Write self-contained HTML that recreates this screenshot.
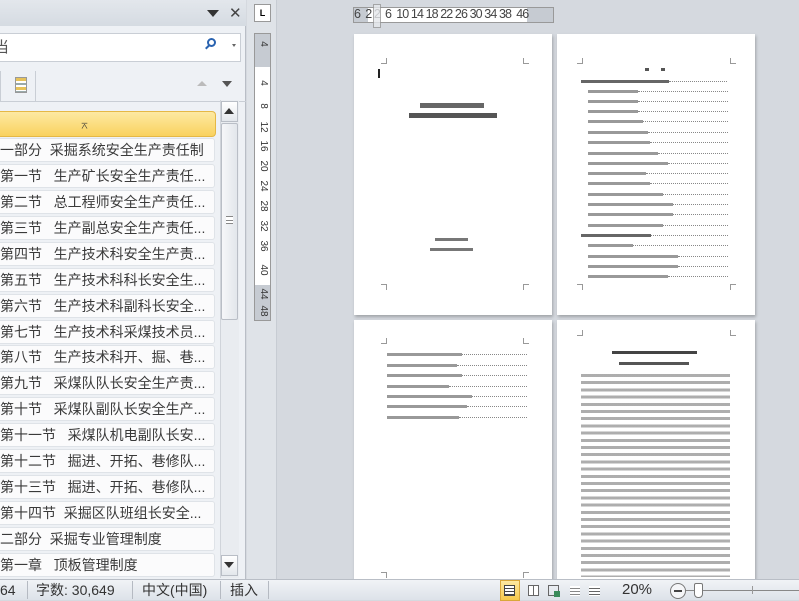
<!DOCTYPE html>
<html><head><meta charset="utf-8">
<style>
*{margin:0;padding:0;box-sizing:border-box}
body{width:799px;height:600px;overflow:hidden;position:relative;background:#d5d9df;font-family:"Liberation Sans","Noto Sans CJK SC",sans-serif}
.abs{position:absolute}
#nav{left:0;top:0;width:246px;height:579px;background:#eef1f5;border-right:1px solid #b9bec6}
.item{position:absolute;left:0;width:215px;height:24px;background:#fbfbfc;border:1px solid #dfe3e8;border-left:none;border-radius:0 3px 3px 0;font-size:14px;color:#3a3a3a;line-height:22px;white-space:nowrap;overflow:hidden}
.page{position:absolute;background:#fff;box-shadow:1px 2px 3px rgba(0,0,0,.25)}
.cm{position:absolute;width:6px;height:6px;border-color:#999;border-style:solid;border-width:0}
.bar{position:absolute;height:3px;background:#555}
.dots{position:absolute;height:1px;border-top:1px dotted #888}
.vn{position:absolute;left:256px;width:14px;font-size:10px;color:#333;transform:rotate(90deg);text-align:center;line-height:12px}
#status{left:0;top:579px;width:799px;height:21px;background:linear-gradient(#f1f3f6,#dde2e9);border-top:1px solid #b9bec6;font-size:14px;color:#333;line-height:20px}
</style></head><body>

<div id="nav" class="abs">
  <div class="abs" style="left:0;top:0;width:246px;height:26px;background:linear-gradient(#e3e7ec,#d5dbe2)"></div>
  <div class="abs" style="left:207px;top:10px;width:0;height:0;border-left:6px solid transparent;border-right:6px solid transparent;border-top:7px solid #333"></div>
  <div class="abs" style="left:229px;top:4px;font-size:15px;color:#444">✕</div>
  <div class="abs" style="left:0;top:33px;width:241px;height:29px;background:#fff;border:1px solid #c9ced5;border-left:none"></div>
  <div class="abs" style="left:-6px;top:36px;font-size:15px;color:#555">当</div>
  <div class="abs" style="left:207px;top:38px;width:9px;height:9px;border:2px solid #2a63b0;border-radius:50%"></div>
  <div class="abs" style="left:205px;top:46px;width:5px;height:2px;background:#2a63b0;transform:rotate(-45deg)"></div>
  <div class="abs" style="left:232px;top:44px;width:0;height:0;border-left:2px solid transparent;border-right:2px solid transparent;border-top:3px solid #666"></div>
  <div class="abs" style="left:0;top:71px;width:36px;height:30px;border-right:1px solid #c9ced5;border-left:1px solid #c9ced5"></div>
  <div class="abs" style="left:15px;top:77px;width:12px;height:16px;background:linear-gradient(#e6c25a 0 3px,#fff 3px 5px,#9aa 5px 7px,#fff 7px 9px,#e6c25a 9px 12px,#fff 12px 13px,#9aa 13px 16px);border:1px solid #999"></div>
  <div class="abs" style="left:197px;top:81px;width:0;height:0;border-left:5px solid transparent;border-right:5px solid transparent;border-bottom:5px solid #bbb"></div>
  <div class="abs" style="left:222px;top:81px;width:0;height:0;border-left:5px solid transparent;border-right:5px solid transparent;border-top:6px solid #555"></div>
  <div class="abs" style="left:0;top:101px;width:246px;height:1px;background:#c9ced5"></div>
  <div class="abs" style="left:0;top:111px;width:216px;height:26px;background:linear-gradient(#fde9a2,#f9d25f);border:1px solid #e5b845;border-left:none;border-radius:0 4px 4px 0"></div>
  <div class="abs" style="left:80px;top:119px;font-size:9px;color:#333">⌅</div>
  <div class="item" style="top:138px">一部分&nbsp;&nbsp;采掘系统安全生产责任制</div>
  <div class="item" style="top:164px">第一节&nbsp;&nbsp;&nbsp;生产矿长安全生产责任...</div>
  <div class="item" style="top:190px">第二节&nbsp;&nbsp;&nbsp;总工程师安全生产责任...</div>
  <div class="item" style="top:216px">第三节&nbsp;&nbsp;&nbsp;生产副总安全生产责任...</div>
  <div class="item" style="top:242px">第四节&nbsp;&nbsp;&nbsp;生产技术科安全生产责...</div>
  <div class="item" style="top:268px">第五节&nbsp;&nbsp;&nbsp;生产技术科科长安全生...</div>
  <div class="item" style="top:294px">第六节&nbsp;&nbsp;&nbsp;生产技术科副科长安全...</div>
  <div class="item" style="top:320px">第七节&nbsp;&nbsp;&nbsp;生产技术科采煤技术员...</div>
  <div class="item" style="top:345px">第八节&nbsp;&nbsp;&nbsp;生产技术科开、掘、巷...</div>
  <div class="item" style="top:371px">第九节&nbsp;&nbsp;&nbsp;采煤队队长安全生产责...</div>
  <div class="item" style="top:397px">第十节&nbsp;&nbsp;&nbsp;采煤队副队长安全生产...</div>
  <div class="item" style="top:423px">第十一节&nbsp;&nbsp;&nbsp;采煤队机电副队长安...</div>
  <div class="item" style="top:449px">第十二节&nbsp;&nbsp;&nbsp;掘进、开拓、巷修队...</div>
  <div class="item" style="top:475px">第十三节&nbsp;&nbsp;&nbsp;掘进、开拓、巷修队...</div>
  <div class="item" style="top:501px">第十四节&nbsp;&nbsp;采掘区队班组长安全...</div>
  <div class="item" style="top:527px">二部分&nbsp;&nbsp;采掘专业管理制度</div>
  <div class="item" style="top:553px">第一章&nbsp;&nbsp;&nbsp;顶板管理制度</div>
  <div class="abs" style="left:220px;top:100px;width:19px;height:478px;background:#e9ecf0;border-left:1px solid #d0d4da"></div>
  <div class="abs" style="left:221px;top:101px;width:17px;height:21px;background:linear-gradient(#fff,#e3e7ec);border:1px solid #b9bec6"></div>
  <div class="abs" style="left:224px;top:108px;width:0;height:0;border-left:5px solid transparent;border-right:5px solid transparent;border-bottom:6px solid #333"></div>
  <div class="abs" style="left:221px;top:123px;width:17px;height:197px;background:linear-gradient(90deg,#f6f7f9,#e2e6eb);border:1px solid #b9bec6;border-radius:2px"></div>
  <div class="abs" style="left:226px;top:216px;width:7px;height:8px;border-top:1px solid #888;border-bottom:1px solid #888;background:linear-gradient(#fff 0 3px,#888 3px 4px,#fff 4px)"></div>
  <div class="abs" style="left:221px;top:555px;width:17px;height:21px;background:linear-gradient(#fff,#e3e7ec);border:1px solid #b9bec6"></div>
  <div class="abs" style="left:224px;top:562px;width:0;height:0;border-left:5px solid transparent;border-right:5px solid transparent;border-top:6px solid #333"></div>
</div>

<!-- ruler area -->
<div class="abs" style="left:247px;top:0;width:30px;height:579px;background:#dfe3e8;border-right:1px solid #c7ccd3"></div>
<div class="abs" style="left:254px;top:4px;width:17px;height:18px;background:#fff;border:1px solid #999;font-size:9px;text-align:center;line-height:16px;font-weight:bold">L</div>
<div class="abs" style="left:254px;top:33px;width:17px;height:288px;background:#ffffff;border:1px solid #999"></div>
<div class="abs" style="left:255px;top:34px;width:15px;height:33px;background:#c6cbd2"></div>
<div class="abs" style="left:255px;top:285px;width:15px;height:35px;background:#c6cbd2"></div>
<div class="vn" style="top:38px">4</div>
<div class="vn" style="top:77px">4</div>
<div class="vn" style="top:100px">8</div>
<div class="vn" style="top:121px">12</div>
<div class="vn" style="top:140px">16</div>
<div class="vn" style="top:160px">20</div>
<div class="vn" style="top:180px">24</div>
<div class="vn" style="top:200px">28</div>
<div class="vn" style="top:220px">32</div>
<div class="vn" style="top:240px">36</div>
<div class="vn" style="top:264px">40</div>
<div class="vn" style="top:288px">44</div>
<div class="vn" style="top:305px">48</div>

<!-- horizontal ruler -->
<div class="abs" style="left:353px;top:7px;width:201px;height:16px;background:#fff;border:1px solid #999"></div>
<div class="abs" style="left:354px;top:8px;width:14px;height:14px;background:#c6cbd2"></div>
<div class="abs" style="left:527px;top:8px;width:26px;height:14px;background:#c6cbd2"></div>
<div class="abs" style="left:354px;top:7px;font-size:12.5px;color:#444;letter-spacing:-0.9px;white-space:pre">6  2 2  6  10 14 18 22 26 30 34 38  46</div>
<div class="abs" style="left:373px;top:4px;width:8px;height:24px;background:#e6e8ec;border:1px solid #999;opacity:.8"></div>

<!-- page 1 -->
<div class="page" style="left:354px;top:34px;width:198px;height:281px">
  <div class="cm" style="left:27px;top:24px;border-right-width:1px;border-bottom-width:1px"></div>
  <div class="cm" style="left:169px;top:24px;border-left-width:1px;border-bottom-width:1px"></div>
  <div class="cm" style="left:27px;top:250px;border-right-width:1px;border-top-width:1px"></div>
  <div class="cm" style="left:169px;top:250px;border-left-width:1px;border-top-width:1px"></div>
  <div class="abs" style="left:24px;top:35px;width:2px;height:9px;background:#222"></div>
  <div class="bar" style="left:66px;top:69px;width:64px;height:5px;background:#666"></div>
  <div class="bar" style="left:55px;top:79px;width:88px;height:5px;background:#555"></div>
  <div class="bar" style="left:81px;top:204px;width:33px;height:3px;background:#777"></div>
  <div class="bar" style="left:76px;top:214px;width:43px;height:3px;background:#777"></div>
</div>

<!-- page 2 TOC -->
<div class="page" style="left:557px;top:34px;width:198px;height:281px">
  <div class="cm" style="left:20px;top:24px;border-right-width:1px;border-bottom-width:1px"></div>
  <div class="cm" style="left:173px;top:24px;border-left-width:1px;border-bottom-width:1px"></div>
  <div class="cm" style="left:20px;top:250px;border-right-width:1px;border-top-width:1px"></div>
  <div class="cm" style="left:173px;top:250px;border-left-width:1px;border-top-width:1px"></div>
  <div class="bar" style="left:88px;top:34px;width:4px"></div>
  <div class="bar" style="left:104px;top:34px;width:4px"></div>
  <div class="bar" style="left:24px;top:46px;width:88px;background:#666"></div><div class="dots" style="left:112px;top:47px;width:58px"></div>
  <div class="bar" style="left:31px;top:56px;width:50px;background:#999"></div><div class="dots" style="left:81px;top:57px;width:90px"></div>
  <div class="bar" style="left:31px;top:66px;width:50px;background:#999"></div><div class="dots" style="left:81px;top:67px;width:90px"></div>
  <div class="bar" style="left:31px;top:76px;width:50px;background:#999"></div><div class="dots" style="left:81px;top:77px;width:90px"></div>
  <div class="bar" style="left:31px;top:86px;width:55px;background:#999"></div><div class="dots" style="left:86px;top:87px;width:85px"></div>
  <div class="bar" style="left:31px;top:97px;width:60px;background:#999"></div><div class="dots" style="left:91px;top:98px;width:80px"></div>
  <div class="bar" style="left:31px;top:107px;width:62px;background:#999"></div><div class="dots" style="left:93px;top:108px;width:78px"></div>
  <div class="bar" style="left:31px;top:118px;width:70px;background:#999"></div><div class="dots" style="left:101px;top:119px;width:70px"></div>
  <div class="bar" style="left:31px;top:128px;width:80px;background:#999"></div><div class="dots" style="left:111px;top:129px;width:60px"></div>
  <div class="bar" style="left:31px;top:138px;width:58px;background:#999"></div><div class="dots" style="left:89px;top:139px;width:82px"></div>
  <div class="bar" style="left:31px;top:148px;width:62px;background:#999"></div><div class="dots" style="left:93px;top:149px;width:78px"></div>
  <div class="bar" style="left:31px;top:159px;width:75px;background:#999"></div><div class="dots" style="left:106px;top:160px;width:65px"></div>
  <div class="bar" style="left:31px;top:169px;width:85px;background:#999"></div><div class="dots" style="left:116px;top:170px;width:55px"></div>
  <div class="bar" style="left:31px;top:179px;width:85px;background:#999"></div><div class="dots" style="left:116px;top:180px;width:55px"></div>
  <div class="bar" style="left:31px;top:190px;width:75px;background:#999"></div><div class="dots" style="left:106px;top:191px;width:65px"></div>
  <div class="bar" style="left:24px;top:200px;width:70px;background:#666"></div><div class="dots" style="left:94px;top:201px;width:77px"></div>
  <div class="bar" style="left:31px;top:210px;width:45px;background:#999"></div><div class="dots" style="left:76px;top:211px;width:95px"></div>
  <div class="bar" style="left:31px;top:221px;width:90px;background:#999"></div><div class="dots" style="left:121px;top:222px;width:50px"></div>
  <div class="bar" style="left:31px;top:231px;width:90px;background:#999"></div><div class="dots" style="left:121px;top:232px;width:50px"></div>
  <div class="bar" style="left:31px;top:241px;width:80px;background:#999"></div><div class="dots" style="left:111px;top:242px;width:60px"></div>
</div>

<!-- page 3 -->
<div class="page" style="left:354px;top:320px;width:198px;height:260px">
  <div class="cm" style="left:27px;top:18px;border-right-width:1px;border-bottom-width:1px"></div>
  <div class="cm" style="left:169px;top:18px;border-left-width:1px;border-bottom-width:1px"></div>
  <div class="cm" style="left:27px;top:252px;border-right-width:1px;border-top-width:1px"></div>
  <div class="cm" style="left:169px;top:252px;border-left-width:1px;border-top-width:1px"></div>
  <div class="bar" style="left:33px;top:33px;width:75px;background:#999"></div><div class="dots" style="left:108px;top:34px;width:65px"></div>
  <div class="bar" style="left:33px;top:44px;width:70px;background:#999"></div><div class="dots" style="left:103px;top:45px;width:70px"></div>
  <div class="bar" style="left:33px;top:54px;width:75px;background:#999"></div><div class="dots" style="left:108px;top:55px;width:65px"></div>
  <div class="bar" style="left:33px;top:65px;width:62px;background:#999"></div><div class="dots" style="left:95px;top:66px;width:78px"></div>
  <div class="bar" style="left:33px;top:75px;width:85px;background:#999"></div><div class="dots" style="left:118px;top:76px;width:55px"></div>
  <div class="bar" style="left:33px;top:85px;width:80px;background:#999"></div><div class="dots" style="left:113px;top:86px;width:60px"></div>
  <div class="bar" style="left:33px;top:96px;width:72px;background:#999"></div><div class="dots" style="left:105px;top:97px;width:68px"></div>
</div>

<!-- page 4 -->
<div class="page" style="left:557px;top:320px;width:198px;height:260px">
  <div class="cm" style="left:20px;top:10px;border-right-width:1px;border-bottom-width:1px"></div>
  <div class="cm" style="left:173px;top:10px;border-left-width:1px;border-bottom-width:1px"></div>
  <div class="bar" style="left:55px;top:31px;width:85px;background:#444"></div>
  <div class="bar" style="left:62px;top:42px;width:70px;background:#555"></div>
  <div style="position:absolute;left:24px;top:52px;width:149px;height:205px;background:repeating-linear-gradient(#fff 0 2px,#999 2px 5px,#fff 5px 7.2px);opacity:.8"></div>
</div>

<!-- status bar -->
<div id="status" class="abs">
  <span class="abs" style="left:0;top:0">64</span>
  <span class="abs" style="left:27px;top:1px;width:1px;height:18px;background:#b5bac2"></span>
  <span class="abs" style="left:36px;top:0">字数: 30,649</span>
  <span class="abs" style="left:132px;top:1px;width:1px;height:18px;background:#b5bac2"></span>
  <span class="abs" style="left:142px;top:0">中文(中国)</span>
  <span class="abs" style="left:220px;top:1px;width:1px;height:18px;background:#b5bac2"></span>
  <span class="abs" style="left:230px;top:0">插入</span>
  <span class="abs" style="left:268px;top:1px;width:1px;height:18px;background:#b5bac2"></span>
  <span class="abs" style="left:500px;top:0;width:20px;height:21px;background:linear-gradient(#fde9a2,#f6c84a);border:1px solid #d9a73a"></span>
  <span class="abs" style="left:504px;top:5px;width:11px;height:11px;border:1px solid #444;background:repeating-linear-gradient(#fff 0 2px,#444 2px 3px)"></span>
  <span class="abs" style="left:528px;top:5px;width:11px;height:11px;border:1px solid #666;background:repeating-linear-gradient(90deg,#fff 0 4px,#666 4px 5px)"></span>
  <span class="abs" style="left:548px;top:5px;width:11px;height:11px;border:1px solid #666"></span>
  <span class="abs" style="left:554px;top:11px;width:6px;height:6px;background:#3a8a5a"></span>
  <span class="abs" style="left:570px;top:6px;width:10px;height:10px;background:repeating-linear-gradient(#fff 0 2px,#888 2px 3px)"></span>
  <span class="abs" style="left:589px;top:6px;width:11px;height:10px;background:repeating-linear-gradient(#fff 0 2px,#666 2px 3px)"></span>
  <span class="abs" style="left:622px;top:0;font-size:15px">20%</span>
  <span class="abs" style="left:670px;top:3px;width:16px;height:16px;border:1px solid #777;border-radius:50%;background:#f5f6f8"></span>
  <span class="abs" style="left:674px;top:10px;width:8px;height:2px;background:#444"></span>
  <span class="abs" style="left:686px;top:10px;width:113px;height:1px;background:#888"></span>
  <span class="abs" style="left:694px;top:3px;width:9px;height:15px;border:1px solid #777;border-radius:2px 2px 4px 4px;background:#fff"></span>
  <span class="abs" style="left:752px;top:6px;width:1px;height:8px;background:#999"></span>
</div>
</body></html>
